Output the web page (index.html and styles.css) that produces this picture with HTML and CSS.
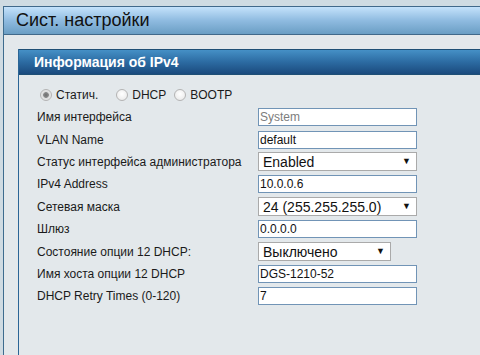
FILE: index.html
```html
<!DOCTYPE html>
<html lang="ru">
<head>
  <meta charset="UTF-8">
  <title>Сист. настройки</title>
  <link rel="stylesheet" href="styles.css">
</head>
<body>
  <div class="page">
    <div class="title-bar">Сист. настройки</div>

    <div class="panel">
      <div class="panel-head">Информация об IPv4</div>

      <div class="form">
        <div class="radios">
          <label class="radio"><input type="radio" name="mode" checked> Статич.</label>
          <label class="radio"><input type="radio" name="mode"> DHCP</label>
          <label class="radio"><input type="radio" name="mode"> BOOTP</label>
        </div>

        <div class="rows">
          <div class="lbl">Имя интерфейса</div>
          <div class="ctl"><input class="txt" type="text" value="System" disabled></div>

          <div class="lbl">VLAN Name</div>
          <div class="ctl"><input class="txt" type="text" value="default"></div>

          <div class="lbl">Статус интерфейса администратора</div>
          <div class="ctl"><span class="sel"><select><option>Enabled</option></select></span></div>

          <div class="lbl">IPv4 Address</div>
          <div class="ctl"><input class="txt" type="text" value="10.0.0.6"></div>

          <div class="lbl">Сетевая маска</div>
          <div class="ctl"><span class="sel"><select><option>24 (255.255.255.0)</option></select></span></div>

          <div class="lbl">Шлюз</div>
          <div class="ctl"><input class="txt" type="text" value="0.0.0.0"></div>

          <div class="lbl">Состояние опции 12 DHCP:</div>
          <div class="ctl"><span class="sel sel-short"><select><option>Выключено</option></select></span></div>

          <div class="lbl">Имя хоста опции 12 DHCP</div>
          <div class="ctl"><input class="txt" type="text" value="DGS-1210-52"></div>

          <div class="lbl">DHCP Retry Times (0-120)</div>
          <div class="ctl"><input class="txt" type="text" value="7"></div>
        </div>
      </div>
    </div>
  </div>
</body>
</html>
```

FILE: styles.css
```css
html, body {
  height: 100%;
}

body {
  margin: 0;
  background: #cfdbe2;
  font-family: 'Liberation Sans', Arial, sans-serif;
  color: #1a1a1a;
  overflow: hidden;
}

.page {
  box-sizing: border-box;
  display: flex;
  flex-direction: column;
  margin: 6px 0 0 3px;
  height: calc(100vh - 6px);
  background: #e3e8eb;
  border-left: 1px solid #3e6c8e;
}

/* верхняя полоса */
.title-bar {
  height: 27px;
  line-height: 27px;
  padding-left: 12px;
  font-size: 18px;
  color: #111;
  border-top: 1px solid #41698a;
  border-bottom: 1px solid #41698a;
  background: linear-gradient(to bottom, #c4e2fb, #8fbbe0 50%, #6a9ec4);
}

.panel {
  flex: 1;
  margin: 14px 0 0 14px;
  border-left: 1px solid #2b6595;
}

.panel-head {
  height: 24px;
  line-height: 24px;
  padding-left: 15px;
  font-size: 14px;
  font-weight: bold;
  color: #fff;
  border-top: 1px solid #1e4f75;
  border-bottom: 1px solid #1e4f75;
  background: linear-gradient(to bottom, #4590c6, #2c6ba2 50%, #1a4a7d);
}

.form {
  padding: 11px 0 0 18px;
  font-size: 12px;
}

.radios {
  display: flex;
  align-items: center;
  height: 18px;
}

.radio {
  display: flex;
  align-items: center;
  margin-right: 5px;
}

/* серые кнопки-кружки */
.radio input {
  appearance: none;
  box-sizing: border-box;
  margin: 0 4px 0 3px;
  width: 12px;
  height: 12px;
  border: 1px solid #b4b4b4;
  border-radius: 50%;
  background: radial-gradient(circle at 50% 40%, #ffffff, #e6e6e6);
}

.radio input:checked {
  background: radial-gradient(circle, #6e6e6e 0, #8a8a8a 2.5px, #dcdcdc 3.2px, #f4f4f4);
}

.radio:first-child {
  margin-right: 15px;
}

.rows {
  display: grid;
  grid-template-columns: 221px 160px;
  grid-auto-rows: 22.4px;
  margin-top: 2px;
}

.lbl {
  display: flex;
  align-items: center;
}

.ctl {
  display: flex;
  align-items: center;
}

.txt {
  box-sizing: border-box;
  width: 159px;
  height: 18px;
  margin: 0;
  padding: 0 1px;
  border: 1px solid #7194b6;
  background: #fff;
  font-family: 'Liberation Sans', Arial, sans-serif;
  font-size: 12px;
  color: #111;
}

.txt:disabled {
  color: #7d7d7d;
  background: #fff;
}

.sel {
  position: relative;
  display: inline-block;
}

.sel::after {
  content: '\25BC';
  position: absolute;
  right: 6px;
  top: 4px;
  font-size: 9px;
  color: #111;
  pointer-events: none;
}

.sel select {
  box-sizing: border-box;
  width: 159px;
  height: 19px;
  margin: 0;
  padding: 0 0 0 4px;
  appearance: none;
  border: 1px solid #aaa;
  border-radius: 0;
  background: #fff;
  font-family: 'Liberation Sans', Arial, sans-serif;
  font-size: 14px;
  color: #111;
}

.sel-short select {
  width: 133px;
}
```
